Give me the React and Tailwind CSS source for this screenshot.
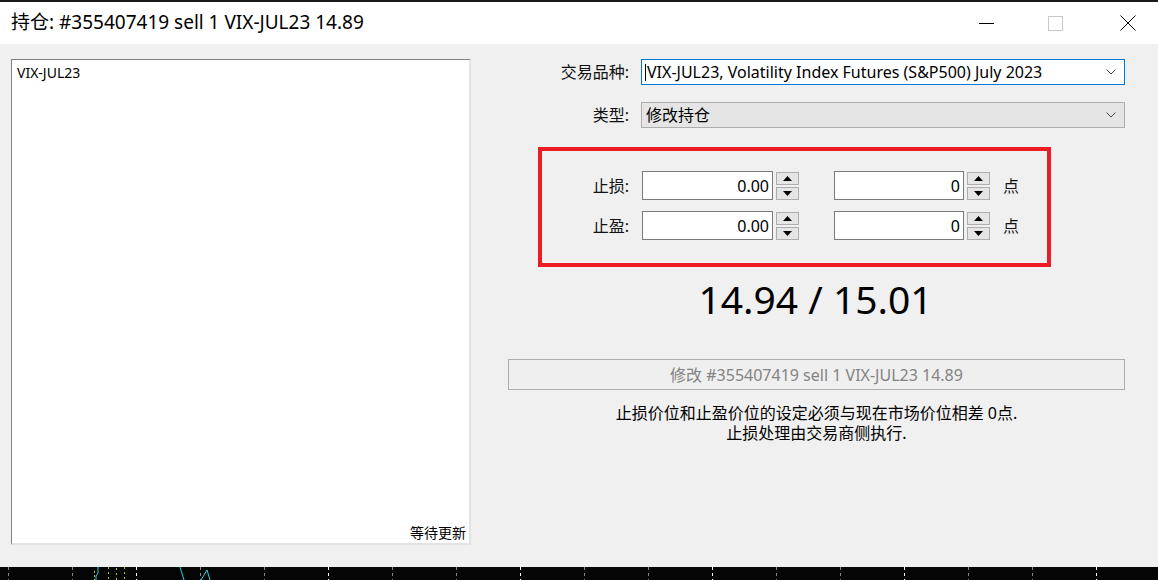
import React from "react";

const F = { fontFamily: '"Noto Sans", "Noto Sans CJK SC", sans-serif' };

function Chevron() {
  return (
    <svg width="10" height="6" viewBox="0 0 10 6" className="shrink-0">
      <path d="M0.5 0.5 L5 5 L9.5 0.5" fill="none" stroke="#444" strokeWidth="1" />
    </svg>
  );
}

function Spinner() {
  return (
    <div className="flex flex-col gap-[2px] ml-[3px]">
      <div className="w-[23px] h-[13px] bg-[#e5e5e5] border border-[#adadad] flex items-center justify-center">
        <svg width="9" height="5" viewBox="0 0 9 5"><path d="M4.5 0 L9 5 L0 5Z" fill="#000" /></svg>
      </div>
      <div className="w-[23px] h-[13px] bg-[#e5e5e5] border border-[#adadad] flex items-center justify-center">
        <svg width="9" height="5" viewBox="0 0 9 5"><path d="M0 0 L9 0 L4.5 5Z" fill="#000" /></svg>
      </div>
    </div>
  );
}

function NumBox({ value, w }) {
  return (
    <div className={`h-[29px] bg-white border border-[#7a7a7a] flex items-center justify-end pr-[3px] text-[16px] text-black ${w}`}>
      {value}
    </div>
  );
}

function Row({ label }) {
  return (
    <div className="flex items-center h-[29px]">
      <div className="w-[100px] text-right text-[16px] text-[#111] pr-[13px]">{label}</div>
      <NumBox value="0.00" w="w-[131px]" />
      <Spinner />
      <div className="w-[35px]" />
      <NumBox value="0" w="w-[130px]" />
      <Spinner />
      <div className="ml-[13px] text-[16px] text-[#111]">点</div>
    </div>
  );
}

export default function App() {
  const ticks = [8, 72, 136, 200, 264, 328, 392, 456, 520, 584, 648, 712, 776, 840, 904, 968, 1032, 1096];
  const white = [136, 328, 520, 712, 904, 1096];
  return (
    <div className="w-[1158px] h-[580px] flex flex-col overflow-hidden select-none" style={F}>
      <div className="h-[2px] bg-[#1a1a1a] shrink-0" />
      <div className="h-[42px] bg-white flex items-center shrink-0">
        <div className="pl-[11px] text-[19px] text-black flex-1 -mt-[1px]">持仓: #355407419 sell 1 VIX-JUL23 14.89</div>
        <div className="flex items-center h-full pr-[22px]">
          <div className="w-[15px] h-[1px] bg-black" />
          <div className="ml-[54px] w-[15px] h-[15px] border border-[#c8c8c8]" />
          <svg className="ml-[57px]" width="16" height="16" viewBox="0 0 16 16">
            <path d="M0.5 0.5 L15.5 15.5 M15.5 0.5 L0.5 15.5" stroke="#000" strokeWidth="1" />
          </svg>
        </div>
      </div>
      <div className="flex-1 bg-[#f0f0f0] flex pt-[15px] pl-[11px]">
        <div className="w-[460px] h-[486px] bg-white border-t border-l border-[#828282] border-r-2 border-b-2 border-r-[#e3e3e3] border-b-[#e3e3e3] flex flex-col justify-between">
          <div className="pl-[5px] pt-[4px] text-[14px] text-black leading-[18px]">VIX-JUL23</div>
          <div className="text-right pr-[3px] pb-[1px] text-[14px] text-black leading-[19px]">等待更新</div>
        </div>
        <div className="ml-[37px] w-[617px] flex flex-col">
          <div className="flex items-center h-[26px]">
            <div className="w-[133px] text-right pr-[12px] text-[16px] text-[#111]">交易品种:</div>
            <div className="w-[484px] h-[26px] bg-white border border-[#0078d7] flex items-center pl-[3px] pr-[8px]">
              <div className="w-[1px] h-[17px] bg-black mr-[1px]" />
              <div className="flex-1 text-[16px] text-black whitespace-nowrap">VIX-JUL23, Volatility Index Futures (S&amp;P500) July 2023</div>
              <Chevron />
            </div>
          </div>
          <div className="flex items-center h-[26px] mt-[17px]">
            <div className="w-[133px] text-right pr-[12px] text-[16px] text-[#111]">类型:</div>
            <div className="w-[484px] h-[26px] bg-[#e5e5e5] border border-[#adadad] flex items-center pl-[4px] pr-[8px]">
              <div className="flex-1 text-[16px] text-black">修改持仓</div>
              <Chevron />
            </div>
          </div>
          <div className="ml-[30px] mt-[19px] w-[513px] h-[120px] border-[4px] border-[#ed1c24] flex flex-col pt-[20px] gap-[11px]">
            <Row label="止损:" />
            <Row label="止盈:" />
          </div>
          <div className="text-center text-[39px] leading-[42px] text-black mt-[11px] pr-[2px]">14.94 / 15.01</div>
          <div className="mt-[39px] h-[31px] border border-[#adadad] bg-[#efefef] flex items-center justify-center text-[16px] text-[#838383]">
            修改 #355407419 sell 1 VIX-JUL23 14.89
          </div>
          <div className="mt-[13px] text-center text-[16px] leading-[20px] text-black">
            止损价位和止盈价位的设定必须与现在市场价位相差 0点.
            <br />
            止损处理由交易商侧执行.
          </div>
        </div>
      </div>
      <div className="h-[13px] bg-[#050505] shrink-0">
        <svg width="1158" height="13" viewBox="0 0 1158 13">
          {ticks.map((x) => (
            <line key={x} x1={x + 0.5} y1="0" x2={x + 0.5} y2="13" stroke={white.includes(x) ? "#ffffff" : "#7a8a9a"} strokeWidth="1" strokeDasharray="3 3" />
          ))}
          <path d="M98 0 L98 6 L96 9 L96 13" stroke="#2bd3d3" strokeWidth="1" fill="none" />
          <path d="M94.5 4 L94.5 13" stroke="#9acd32" strokeWidth="1" strokeDasharray="2 2" />
          <path d="M108.5 0 L108.5 13" stroke="#9acd32" strokeWidth="1" strokeDasharray="2 3" />
          <path d="M116.5 1 L116.5 13" stroke="#9acd32" strokeWidth="1" strokeDasharray="2 3" />
          <path d="M124.5 0 L124.5 13" stroke="#9acd32" strokeWidth="1" strokeDasharray="2 3" />
          <path d="M180 0 L184 13" stroke="#2bd3d3" strokeWidth="1" fill="none" />
          <path d="M201 13 L207 3 L210 13" stroke="#2bd3d3" strokeWidth="1" fill="none" />
        </svg>
      </div>
    </div>
  );
}
